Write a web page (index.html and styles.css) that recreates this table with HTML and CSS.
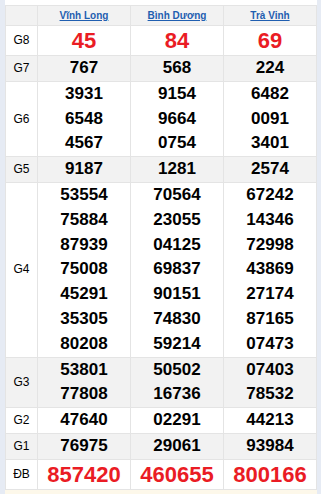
FILE: index.html
```html
<!DOCTYPE html>
<html lang="vi">
<head>
<meta charset="utf-8">
<title>XSMN</title>
<link rel="stylesheet" href="styles.css">
</head>
<body>
<div class="wrap">
<table class="kq">
<colgroup><col class="c-lbl"><col class="c-num"><col class="c-num"><col class="c-num"></colgroup>
<tr class="head"><th></th><th><a href="#">Vĩnh Long</a></th><th><a href="#">Bình Dương</a></th><th><a href="#">Trà Vinh</a></th></tr>
<tr class="big"><td class="lbl">G8</td><td>45</td><td>84</td><td>69</td></tr>
<tr class="alt"><td class="lbl">G7</td><td>767</td><td>568</td><td>224</td></tr>
<tr><td class="lbl">G6</td><td><div>3931</div><div>6548</div><div>4567</div></td><td><div>9154</div><div>9664</div><div>0754</div></td><td><div>6482</div><div>0091</div><div>3401</div></td></tr>
<tr class="alt"><td class="lbl">G5</td><td>9187</td><td>1281</td><td>2574</td></tr>
<tr><td class="lbl">G4</td><td><div>53554</div><div>75884</div><div>87939</div><div>75008</div><div>45291</div><div>35305</div><div>80208</div></td><td><div>70564</div><div>23055</div><div>04125</div><div>69837</div><div>90151</div><div>74830</div><div>59214</div></td><td><div>67242</div><div>14346</div><div>72998</div><div>43869</div><div>27174</div><div>87165</div><div>07473</div></td></tr>
<tr class="alt"><td class="lbl">G3</td><td><div>53801</div><div>77808</div></td><td><div>50502</div><div>16736</div></td><td><div>07403</div><div>78532</div></td></tr>
<tr><td class="lbl">G2</td><td>47640</td><td>02291</td><td>44213</td></tr>
<tr class="alt"><td class="lbl">G1</td><td>76975</td><td>29061</td><td>93984</td></tr>
<tr class="big"><td class="lbl">ĐB</td><td>857420</td><td>460655</td><td>800166</td></tr>
</table>
<div class="foot"></div>
</div>
</body>
</html>
```
FILE: styles.css
```css
html, body {
  margin: 0;
  padding: 0;
  background: #e6ebf4;
}
.wrap {
  margin: 0 4px 0 5px;
  background: #fff;
  padding-top: 5px;
  min-height: 489px;
}
.kq {
  width: 100%;
  border-collapse: collapse;
  font-family: "Liberation Sans", Arial, sans-serif;
  table-layout: fixed;
}
.c-lbl { width: 32px; }
.kq th, .kq td {
  border: 1px solid #e4e4e4;
  text-align: center;
  padding: 0;
}
.kq td {
  font-size: 17px;
  font-weight: bold;
  color: #000;
  line-height: 24.8px;
}
.kq td.lbl {
  font-size: 12px;
  font-weight: normal;
  color: #000;
}
.head th {
  background: #f2f2f2;
  height: 19px;
  line-height: 19px;
  font-size: 10px;
  font-weight: bold;
}
.head th a {
  color: #1f5eb0;
  text-decoration: underline;
}
.alt td { background: #f2f2f2; }
.big td {
  font-size: 22px;
  color: #ea1c24;
  line-height: 29px;
}
.foot {
  height: 6px;
  background: #fdf8ea;
}
```
